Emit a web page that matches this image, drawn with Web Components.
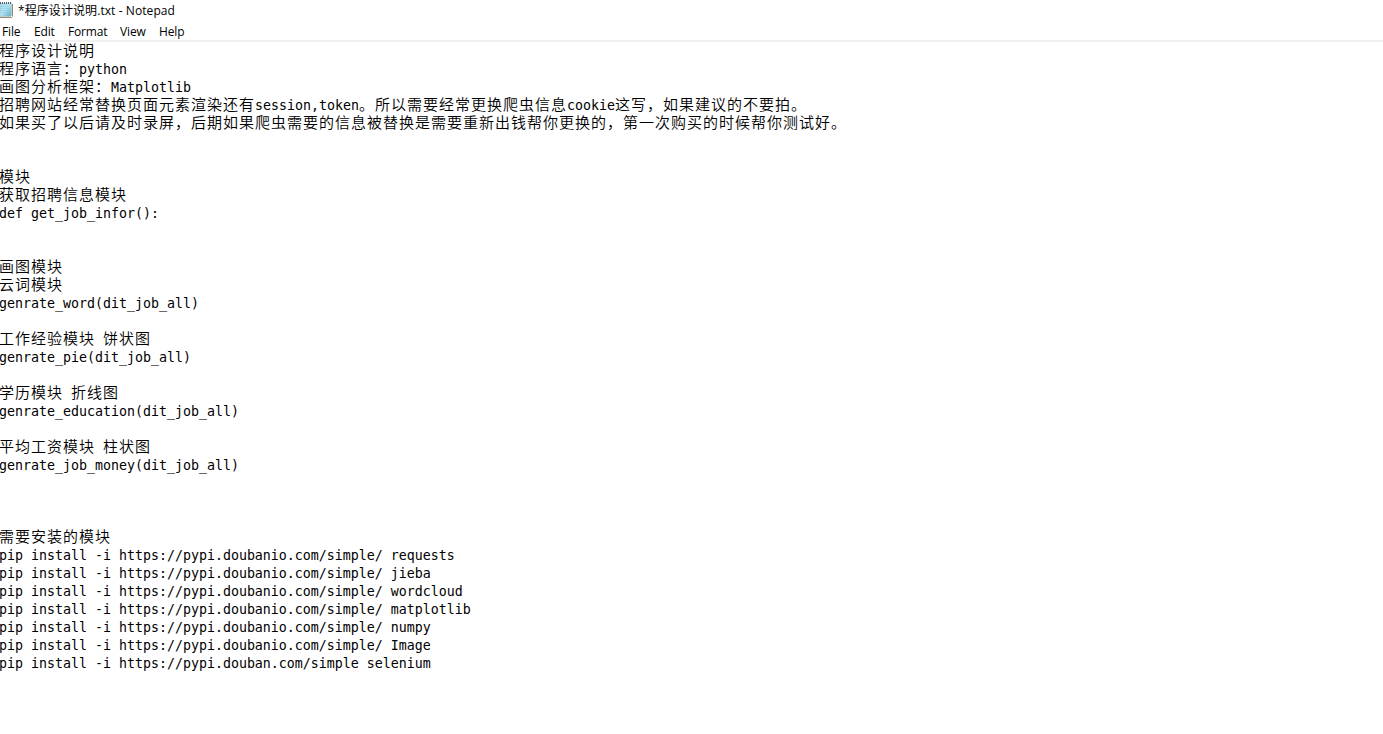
<!DOCTYPE html>
<html lang="zh-CN">
<head>
<meta charset="utf-8">
<title>Notepad</title>
<style>
  html, body {
    margin: 0;
    height: 100%;
    overflow: hidden;
    background: #fff;
    color: #000;
  }
</style>
</head>
<body>

<template id="notepad-window-template">
  <style>
    :host {
      display: flex;
      flex-direction: column;
      height: 100vh;
      font: 12px/16px "Open Sans", "Noto Sans CJK SC", sans-serif;
    }

    .menu {
      display: flex;
      gap: 14px;
      height: 19px;
      padding-left: 2px;
      border-bottom: 2px solid #f0f0f0;
    }
  </style>
  <slot name="title"></slot>
  <nav class="menu"><slot name="menu"></slot></nav>
  <slot></slot>
</template>

<template id="title-bar-template">
  <style>
    :host {
      display: flex;
      align-items: center;
      height: 21px;
      gap: 4px;
    }

    svg {
      flex: none;
      align-self: flex-start;
      width: 14px;
      height: 18px;
    }

    .name {
      white-space: nowrap;
      letter-spacing: 0.08px;
    }
  </style>
  <svg viewBox="0 0 14 18">
    <defs>
      <linearGradient id="page" x1="0" y1="0" x2="1" y2="1">
        <stop offset="0" stop-color="#a5d9e8"/>
        <stop offset=".45" stop-color="#b4e3f0"/>
        <stop offset="1" stop-color="#5eabc6"/>
      </linearGradient>
    </defs>
    <path d="M0 17.500h11.500l1-1V4" fill="none" stroke="#a1896c"/>
    <path d="M0 3.500h11.500V15L10.500 16.500H0z" fill="url(#page)" stroke="#9cc5d0" stroke-width=".6"/>
    <path d="M0 6.500h10M0 8.500h10M0 10.500h10M0 12.500h9" stroke="#78bed1" stroke-width=".3"/>
    <path d="M.5 2v2M2.500 2v2M4.500 2v2M6.500 2v2M8.500 2v2M10.500 2v2" stroke="#4c626b"/>
  </svg>
  <span class="name"><slot></slot></span>
</template>

<template id="menu-item-template">
  <style>
    :host {
      display: block;
      width: var(--item-width);
      padding-top: 3px;
      white-space: nowrap;
      letter-spacing: -0.15px;
    }
  </style>
  <slot></slot>
</template>

<template id="text-editor-template">
  <style>
    :host {
      display: block;
      flex: 1;
      overflow: hidden;
      font: 13.29px/20px "DejaVu Sans Mono", monospace;
    }

    .lines {
      margin-left: -1px;
    }

    .line {
      display: flex;
      height: 18px;
      white-space: pre;
    }

    /* full-width characters take two columns of 8px */
    .wide {
      font: 350 15px/16px "Noto Sans CJK SC", sans-serif;
      letter-spacing: 1px;
    }
  </style>
  <div class="lines"></div>
</template>

<notepad-window>
  <title-bar slot="title">*程序设计说明.txt - Notepad</title-bar>
  <menu-item slot="menu" style="--item-width: 18px">File</menu-item>
  <menu-item slot="menu" style="--item-width: 20px">Edit</menu-item>
  <menu-item slot="menu" style="--item-width: 38px">Format</menu-item>
  <menu-item slot="menu" style="--item-width: 25px">View</menu-item>
  <menu-item slot="menu" style="--item-width: 25px">Help</menu-item>
  <text-editor></text-editor>
</notepad-window>

<script>
  const content = `程序设计说明
程序语言：python
画图分析框架：Matplotlib
招聘网站经常替换页面元素渲染还有session,token。所以需要经常更换爬虫信息cookie这写，如果建议的不要拍。
如果买了以后请及时录屏，后期如果爬虫需要的信息被替换是需要重新出钱帮你更换的，第一次购买的时候帮你测试好。


模块
获取招聘信息模块
def get_job_infor():


画图模块
云词模块
genrate_word(dit_job_all)

工作经验模块 饼状图
genrate_pie(dit_job_all)

学历模块 折线图
genrate_education(dit_job_all)

平均工资模块 柱状图
genrate_job_money(dit_job_all)



需要安装的模块
pip install -i https://pypi.doubanio.com/simple/ requests
pip install -i https://pypi.doubanio.com/simple/ jieba
pip install -i https://pypi.doubanio.com/simple/ wordcloud
pip install -i https://pypi.doubanio.com/simple/ matplotlib
pip install -i https://pypi.doubanio.com/simple/ numpy
pip install -i https://pypi.doubanio.com/simple/ Image
pip install -i https://pypi.douban.com/simple selenium`;

  class TemplateElement extends HTMLElement {
    constructor() {
      super();
      const template = document.getElementById(`${this.localName}-template`);
      this.attachShadow({ mode: "open" }).appendChild(
        template.content.cloneNode(true)
      );
    }
  }

  customElements.define("notepad-window", class extends TemplateElement {});
  customElements.define("title-bar", class extends TemplateElement {});
  customElements.define("menu-item", class extends TemplateElement {});

  customElements.define(
    "text-editor",
    class extends TemplateElement {
      connectedCallback() {
        const lines = this.shadowRoot.querySelector(".lines");
        lines.replaceChildren(...content.split("\n").map(this.renderLine));
      }

      renderLine(text) {
        const line = document.createElement("div");
        line.className = "line";

        for (const run of text.match(/[\x00-\x7f]+|[^\x00-\x7f]+/g) || []) {
          const span = document.createElement("span");
          span.className = run.charCodeAt(0) > 127 ? "wide" : "narrow";
          span.textContent = run;
          line.append(span);
        }
        return line;
      }
    }
  );
</script>
</body>
</html>
